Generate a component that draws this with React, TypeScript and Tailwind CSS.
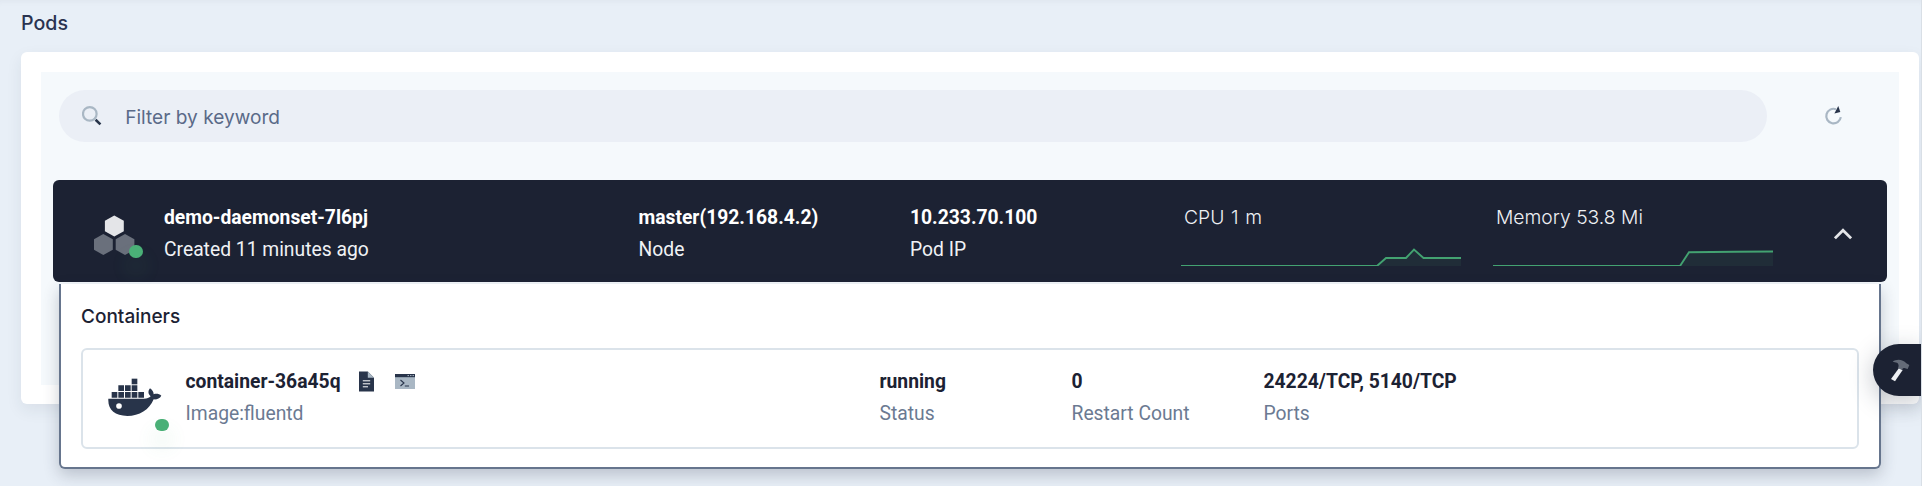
import React from "react";

type FieldProps = { value: string; label: string; muted?: boolean };

function Field({ value, label, muted }: FieldProps) {
  return (
    <div className="whitespace-nowrap text-[19.3px] leading-8">
      <div className={muted ? "font-bold text-[#1c2233]" : "font-bold text-white"}>{value}</div>
      <div className={muted ? "text-[#6b7a92]" : "text-[#f0f2f5]"}>{label}</div>
    </div>
  );
}

function SearchIcon() {
  return (
    <svg width="20" height="20" viewBox="0 0 20 20" fill="none">
      <circle cx="7.8" cy="7.9" r="6.8" stroke="#a9b7c4" strokeWidth="2.2" />
      <path d="M13.6 13.8 18.4 18.4" stroke="#28344a" strokeWidth="2.6" />
    </svg>
  );
}

function RefreshIcon() {
  return (
    <svg width="20" height="20" viewBox="0 0 20 20" fill="none">
      <path d="M16.8 11.2A7.3 7.3 0 1 1 12 3.2" stroke="#a9b7c4" strokeWidth="2.2" />
      <path d="M14.3.1 16.3 5.9 10.4 7.5Z" fill="#28344a" />
    </svg>
  );
}

function PodIcon() {
  return (
    <svg width="42" height="42" viewBox="0 0 42 42">
      <path d="M20.3.4 29.8 5.7V16.3L20.3 21.5 10.9 16.3V5.7Z" fill="#e4e5e8" />
      <path d="M9.3 18.9 18.8 24.2V34.8L9.3 40 0 34.8V24.2Z" fill="#6a707c" />
      <path d="M31 18.9 40.4 24.2V34.8L31 40 21.7 34.8V24.2Z" fill="#6a707c" />
    </svg>
  );
}

function DockerIcon() {
  return (
    <svg width="54" height="40" viewBox="0 0 162 120" fill="#28344a">
      <path d="M71 2h17v17H71z" />
      <path d="M31 22h17v17H31zM51 22h17v17H51zM71 22h17v17H71z" />
      <path d="M11 42h17v17H11zM31 42h17v17H31zM51 42h17v17H51zM71 42h17v17H71zM91 42h17v17H91z" />
      <path
        fillRule="evenodd"
        d="M1 62H108C117 62 124 59 128 55C120 48 119 39 126 31C133 35 137 42 137 49C145 46 154 48 160 53C155 62 146 65 137 64C124 96 94 114 58 114C20 114-1 96 1 62ZM33 75.500A8.500 8.500 0 1 0 33 92.500A8.500 8.500 0 1 0 33 75.500Z"
      />
    </svg>
  );
}

function LogIcon() {
  return (
    <svg width="15" height="21" viewBox="0 0 15 21">
      <path d="M0 .4H8.800L15 6.800V20.600H0Z" fill="#28344a" />
      <path d="M8.800.4 15 6.800H8.800Z" fill="#a9b7c4" />
      <path d="M3.800 9.800H11.200M3.800 12.800H11.200M3.800 15.800H9" stroke="#fff" strokeWidth="1" />
    </svg>
  );
}

function TerminalIcon() {
  return (
    <svg width="20" height="15" viewBox="0 0 20 15" fill="none">
      <path d="M0 0H20V15H0Z" fill="#a9b7c4" />
      <path d="M0 0H20V3.200H0Z" fill="#28344a" />
      <path d="M12.500 1.600H14M15 1.600H16.500M17.500 1.600H19" stroke="#a9b7c4" strokeWidth="1" />
      <path d="M5.500 6 9 9 5.500 12M9.800 12H14" stroke="#28344a" strokeWidth="1.100" />
    </svg>
  );
}

function HammerIcon() {
  return (
    <svg width="20" height="23" viewBox="0 0 60 69">
      <path d="M27 27 38 33 15 67 3 60Z" fill="#eef0f3" />
      <path d="M8 8C19-1 39 0 49 13L58 18 53 30 43 27C39 26 37 30 35 33L24 27C27 21 26 14 21 11Z" fill="#646b78" />
    </svg>
  );
}

function Metric({ label, line }: { label: React.ReactNode; line: string }) {
  return (
    <div className="-mt-px flex w-[280px] flex-col">
      <div className="h-8 whitespace-nowrap pl-[3px] font-['Inter',sans-serif] text-[19.3px] font-light leading-8 text-[#eef0f3]">
        {label}
      </div>
      <svg className="mt-[9px]" width="280" height="24" viewBox="0 0 280 24" fill="none">
        <path d={`M0 24${line}V24Z`} fill="#202d38" />
        <path d={`M0 24${line}`} stroke="#43a271" strokeWidth="1.900" />
      </svg>
    </div>
  );
}

function StatusDot() {
  return <span className="absolute h-[12.500px] w-[14px] rounded-full bg-[#4ab077] shadow-[0_14px_18px_4px_rgba(74,176,119,0.08)]" />;
}

export default function App() {
  return (
    <div className="relative h-[486px] w-full overflow-hidden border-r border-[#d9dfe6] bg-[#e8eff7] pl-[21px] pr-[2px] font-['Roboto',sans-serif] shadow-[inset_0_6px_6px_-5px_rgba(36,46,66,0.05)]">
      <h2 className="h-[52px] pt-[7px] font-['Inter',sans-serif] text-[19.600px] font-medium leading-8 text-[#2a3350]">Pods</h2>

      <section className="h-[352px] rounded-md bg-white p-5 shadow-[0_6px_16px_rgba(36,46,66,0.08)]">
        <div className="h-[313px] bg-[#f5f9fc] px-3 pt-[18px]">
          <div className="flex h-[52px] items-center pl-1.5">
            <div className="flex h-[52px] w-[1708px] items-center rounded-full bg-[#ebeff6] pl-[23px]">
              <SearchIcon />
              <span className="ml-[23.200px] pt-px font-['Inter',sans-serif] text-[19.100px] leading-8 text-[#5a6a88]">
                Filter by keyword
              </span>
            </div>
            <button className="ml-[57px]" aria-label="Refresh">
              <RefreshIcon />
            </button>
          </div>

          <div className="mt-[38px] flex h-[102px] rounded-md bg-[#1c2233] pt-[22px]">
            <div className="relative w-[111px] pl-[41px] pt-[12.500px]">
              <PodIcon />
              <div className="absolute left-[76px] top-[43px]">
                <StatusDot />
              </div>
            </div>
            <div className="w-[474.500px]">
              <Field value="demo-daemonset-7l6pj" label="Created 11 minutes ago" />
            </div>
            <div className="w-[271.500px]">
              <Field value="master(192.168.4.2)" label="Node" />
            </div>
            <div className="w-[271px]">
              <Field value="10.233.70.100" label="Pod IP" />
            </div>
            <Metric label={<span className="[word-spacing:1.3px]">CPU 1 m</span>} line="H196L205 16H225L233 7.500L242.500 16H280" />
            <div className="w-8" />
            <Metric label="Memory 53.8 Mi" line="H187L196 10.200L242 9.800L280 9.500" />
            <svg className="ml-[61px] mt-[26px]" width="18" height="12" viewBox="0 0 18 12" fill="none">
              <path d="M.9 10.300 9 2.200 17.100 10.300" stroke="#e4e5e8" strokeWidth="2.900" />
            </svg>
          </div>

          <div className="relative mx-1.5 mt-0.5 h-[185px] rounded-b-md border-2 border-t-0 border-[#66758d] bg-white px-5 pt-[17px] shadow-[0_6px_16px_rgba(36,46,66,0.24)]">
            <h3 className="h-[47px] font-['Inter',sans-serif] text-[19px] font-medium leading-8 text-[#1c2233]">Containers</h3>
            <div className="flex h-[101px] rounded-md border-2 border-[#dbe3ea] pt-[15.500px]">
              <div className="relative w-[102.500px] pl-[25px] pt-[12px]">
                <DockerIcon />
                <div className="absolute left-[71.500px] top-[53px]">
                  <StatusDot />
                </div>
              </div>
              <div className="flex w-[694px]">
                <Field value="container-36a45q" label="Image:fluentd" muted />
                <div className="ml-[18px] flex h-8 items-center gap-[21px]">
                  <LogIcon />
                  <TerminalIcon />
                </div>
              </div>
              <div className="w-48">
                <Field value="running" label="Status" muted />
              </div>
              <div className="w-48">
                <Field value="0" label="Restart Count" muted />
              </div>
              <Field value="24224/TCP, 5140/TCP" label="Ports" muted />
            </div>
          </div>
        </div>
      </section>

      <button
        aria-label="Tools"
        className="absolute right-0 top-[344px] flex h-[52px] w-12 items-center rounded-l-full bg-[#1c2233] pl-[17px] shadow-[0_6px_24px_rgba(36,46,66,0.28)]"
      >
        <HammerIcon />
      </button>
    </div>
  );
}
